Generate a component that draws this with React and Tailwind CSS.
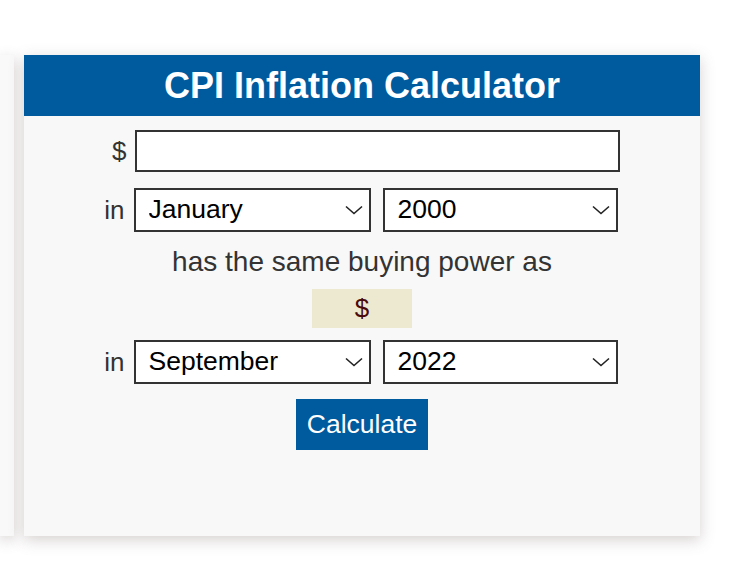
import React from "react";

const Chevron = () => (
  <svg className="pointer-events-none absolute right-[8px] top-1/2 -translate-y-1/2" width="18" height="10" viewBox="0 0 18 10" fill="none">
    <path d="M1 1.5 L9 8.5 L17 1.5" stroke="#222" strokeWidth="1.6" />
  </svg>
);

const Select = ({ value, options, w }) => (
  <div className={`relative ${w}`}>
    <select
      defaultValue={value}
      className="h-[44px] w-full appearance-none rounded-none border-2 border-[#333] bg-white pl-[13px] text-[26.5px] text-black outline-none"
    >
      {options.map((o) => (
        <option key={o}>{o}</option>
      ))}
    </select>
    <Chevron />
  </div>
);

const months = ["January","February","March","April","May","June","July","August","September","October","November","December"];
const years = ["2000", "2022"];

export default function App() {
  return (
    <div className="flex min-h-[564px] gap-[10px] bg-white pt-[55px] font-['Liberation_Sans',Arial,sans-serif]">
      <div className="h-[481px] w-[14px] bg-[#f9f9f9] shadow-[0_4px_14px_rgba(120,100,100,0.3)]" />
      <div className="flex h-[481px] w-[676px] flex-col bg-[#f8f8f8] shadow-[0_4px_14px_rgba(120,100,100,0.3)]">
        <div className="flex h-[61px] items-center justify-center bg-[#005a9e]">
          <h1 className="text-[36px] font-bold text-white">CPI Inflation Calculator</h1>
        </div>
        <div className="mx-auto mt-[14px] flex w-[515px] flex-col text-[#333]">
          <div className="flex items-center justify-end">
            <span className="text-[26px]">$</span>
            <input className="ml-[8px] h-[42px] w-[485px] border-2 border-[#333] bg-white outline-none" />
          </div>
          <div className="mt-[16px] flex items-center justify-end pr-[2px]">
            <span className="text-[26px]">in</span>
            <div className="ml-[9px] flex gap-[12px]">
              <Select value="January" options={months} w="w-[237px]" />
              <Select value="2000" options={years} w="w-[235px]" />
            </div>
          </div>
          <div className="mt-[15px] text-center text-[28px] leading-[30px]">has the same buying power as</div>
          <div className="mx-auto mt-[12px] flex h-[39px] w-[100px] items-center justify-center bg-[#ede9d0] text-[26px] text-[#4a0a0a]">$</div>
          <div className="mt-[12px] flex items-center justify-end pr-[2px]">
            <span className="text-[26px]">in</span>
            <div className="ml-[9px] flex gap-[12px]">
              <Select value="September" options={months} w="w-[237px]" />
              <Select value="2022" options={years} w="w-[235px]" />
            </div>
          </div>
          <button className="mx-auto mt-[15px] h-[51px] w-[132px] bg-[#005a9e] text-[26.5px] text-white">Calculate</button>
        </div>
      </div>
    </div>
  );
}
